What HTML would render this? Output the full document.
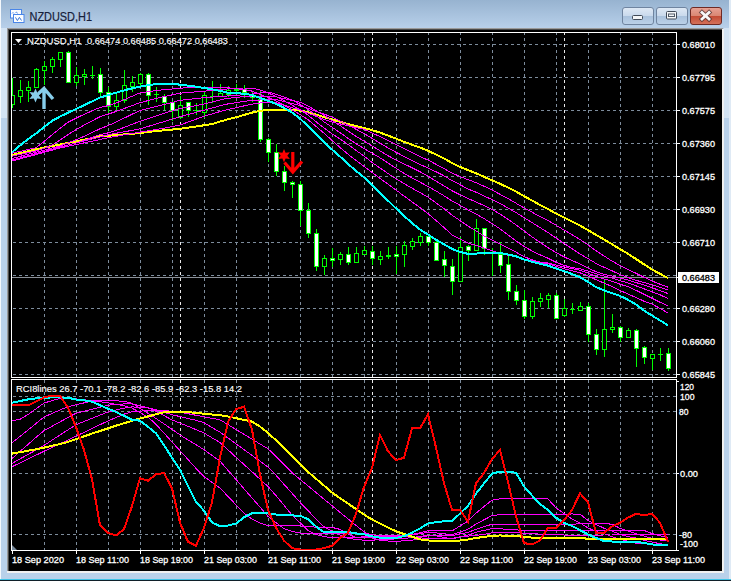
<!DOCTYPE html><html><head><meta charset="utf-8"><style>html,body{margin:0;padding:0;width:731px;height:581px;overflow:hidden;background:#b9d1ea}</style></head><body><svg width="731" height="581" viewBox="0 0 731 581" shape-rendering="crispEdges" style="position:absolute;left:0;top:0">
<defs>
<linearGradient id="tb" x1="0" y1="0" x2="0" y2="1"><stop offset="0" stop-color="#97b3d0"/><stop offset="1" stop-color="#b8d0ea"/></linearGradient>
<linearGradient id="btn" x1="0" y1="0" x2="0" y2="1"><stop offset="0" stop-color="#dfe9f5"/><stop offset="0.5" stop-color="#c9d9ec"/><stop offset="0.5" stop-color="#a9c1dc"/><stop offset="1" stop-color="#bcd2ea"/></linearGradient>
<linearGradient id="cls" x1="0" y1="0" x2="0" y2="1"><stop offset="0" stop-color="#e8a396"/><stop offset="0.5" stop-color="#d98672"/><stop offset="0.5" stop-color="#c24a33"/><stop offset="1" stop-color="#d5735c"/></linearGradient>
</defs>
<rect x="0" y="0" width="731" height="581" fill="#b9d1ea"/>
<rect x="0" y="0" width="731" height="28" fill="url(#tb)"/>
<rect x="1" y="28" width="6" height="90" fill="#d3e3f3"/>
<rect x="724" y="28" width="5" height="90" fill="#d3e3f3"/>
<rect x="0" y="0" width="1" height="581" fill="#f4f8fc"/>
<rect x="729" y="0" width="2" height="581" fill="#dfeaf5"/>
<rect x="0" y="579" width="731" height="1" fill="#3fc3e6"/><rect x="0" y="580" width="731" height="1" fill="#10202a"/>
<g shape-rendering="auto"><rect x="10.5" y="9.5" width="11" height="8.5" fill="#fbfdff" stroke="#4a86e8"/><path d="M12 13.5 L13 12.5 L14 13.5 M15.5 12.5 L16.5 12 L17.5 13.5" stroke="#4a86e8" fill="none" stroke-width="0.9"/><rect x="13.5" y="14.5" width="10.5" height="8" fill="#fbfdff" stroke="#4a86e8"/><path d="M15.5 17.4 L17.4 20.6 L19.4 17.4 L21.5 20.5" stroke="#3a76d8" fill="none" stroke-width="1"/></g>
<text x="29.5" y="21" font-family="Liberation Sans" font-size="12" fill="#16203a" stroke="#16203a" stroke-width="0.2" textLength="62.5" lengthAdjust="spacingAndGlyphs" shape-rendering="auto">NZDUSD,H1</text>
<g shape-rendering="auto">
<rect x="622.5" y="7.5" width="31" height="17" rx="2.5" fill="url(#btn)" stroke="#6f84a0"/>
<rect x="656.5" y="7.5" width="31" height="17" rx="2.5" fill="url(#btn)" stroke="#6f84a0"/>
<rect x="690.5" y="7.5" width="31" height="17" rx="2.5" fill="url(#cls)" stroke="#6e2a24"/>
<rect x="632.5" y="15.5" width="10" height="4" rx="1" fill="#f4f6f8" stroke="#404a58"/>
<rect x="666.5" y="11.5" width="10" height="7.5" rx="1" fill="#f4f6f8" stroke="#404a58"/><rect x="668.5" y="14" width="6" height="2.5" fill="#f4f6f8" stroke="#505a68" stroke-width="1"/>
<path d="M702 12.5 L709 19 M709 12.5 L702 19" stroke="#4a3030" stroke-width="4.6" stroke-linecap="square" opacity="0.75"/><path d="M702 12.5 L709 19 M709 12.5 L702 19" stroke="#f8f8f8" stroke-width="2.8" stroke-linecap="square"/>
</g>
<rect x="7" y="28" width="716" height="545" fill="#9a9a9a"/>
<rect x="8" y="29" width="715" height="543" fill="#4a4a4a"/>
<rect x="9" y="30" width="713" height="541" fill="#000"/>
<rect x="722" y="29" width="2" height="544" fill="#f0f0f0"/>
<rect x="7" y="571" width="717" height="2" fill="#f0f0f0"/>
<line x1="13" y1="44.5" x2="676" y2="44.5" stroke="#7d8c9c" stroke-dasharray="3 3"/>
<line x1="13" y1="77.5" x2="676" y2="77.5" stroke="#7d8c9c" stroke-dasharray="3 3"/>
<line x1="13" y1="110.5" x2="676" y2="110.5" stroke="#7d8c9c" stroke-dasharray="3 3"/>
<line x1="13" y1="143.5" x2="676" y2="143.5" stroke="#7d8c9c" stroke-dasharray="3 3"/>
<line x1="13" y1="176.5" x2="676" y2="176.5" stroke="#7d8c9c" stroke-dasharray="3 3"/>
<line x1="13" y1="209.5" x2="676" y2="209.5" stroke="#7d8c9c" stroke-dasharray="3 3"/>
<line x1="13" y1="242.5" x2="676" y2="242.5" stroke="#7d8c9c" stroke-dasharray="3 3"/>
<line x1="13" y1="275.5" x2="676" y2="275.5" stroke="#7d8c9c" stroke-dasharray="3 3"/>
<line x1="13" y1="308.5" x2="676" y2="308.5" stroke="#7d8c9c" stroke-dasharray="3 3"/>
<line x1="13" y1="341.5" x2="676" y2="341.5" stroke="#7d8c9c" stroke-dasharray="3 3"/>
<line x1="13" y1="374.5" x2="676" y2="374.5" stroke="#7d8c9c" stroke-dasharray="3 3"/>
<line x1="44.5" y1="32" x2="44.5" y2="377" stroke="#7d8c9c" stroke-dasharray="3 3"/>
<line x1="44.5" y1="380" x2="44.5" y2="550" stroke="#7d8c9c" stroke-dasharray="3 3"/>
<line x1="76.5" y1="32" x2="76.5" y2="377" stroke="#7d8c9c" stroke-dasharray="3 3"/>
<line x1="76.5" y1="380" x2="76.5" y2="550" stroke="#7d8c9c" stroke-dasharray="3 3"/>
<line x1="108.5" y1="32" x2="108.5" y2="377" stroke="#7d8c9c" stroke-dasharray="3 3"/>
<line x1="108.5" y1="380" x2="108.5" y2="550" stroke="#7d8c9c" stroke-dasharray="3 3"/>
<line x1="140.5" y1="32" x2="140.5" y2="377" stroke="#7d8c9c" stroke-dasharray="3 3"/>
<line x1="140.5" y1="380" x2="140.5" y2="550" stroke="#7d8c9c" stroke-dasharray="3 3"/>
<line x1="172.5" y1="32" x2="172.5" y2="377" stroke="#7d8c9c" stroke-dasharray="3 3"/>
<line x1="172.5" y1="380" x2="172.5" y2="550" stroke="#7d8c9c" stroke-dasharray="3 3"/>
<line x1="204.5" y1="32" x2="204.5" y2="377" stroke="#7d8c9c" stroke-dasharray="3 3"/>
<line x1="204.5" y1="380" x2="204.5" y2="550" stroke="#7d8c9c" stroke-dasharray="3 3"/>
<line x1="236.5" y1="32" x2="236.5" y2="377" stroke="#7d8c9c" stroke-dasharray="3 3"/>
<line x1="236.5" y1="380" x2="236.5" y2="550" stroke="#7d8c9c" stroke-dasharray="3 3"/>
<line x1="268.5" y1="32" x2="268.5" y2="377" stroke="#7d8c9c" stroke-dasharray="3 3"/>
<line x1="268.5" y1="380" x2="268.5" y2="550" stroke="#7d8c9c" stroke-dasharray="3 3"/>
<line x1="300.5" y1="32" x2="300.5" y2="377" stroke="#7d8c9c" stroke-dasharray="3 3"/>
<line x1="300.5" y1="380" x2="300.5" y2="550" stroke="#7d8c9c" stroke-dasharray="3 3"/>
<line x1="332.5" y1="32" x2="332.5" y2="377" stroke="#7d8c9c" stroke-dasharray="3 3"/>
<line x1="332.5" y1="380" x2="332.5" y2="550" stroke="#7d8c9c" stroke-dasharray="3 3"/>
<line x1="364.5" y1="32" x2="364.5" y2="377" stroke="#7d8c9c" stroke-dasharray="3 3"/>
<line x1="364.5" y1="380" x2="364.5" y2="550" stroke="#7d8c9c" stroke-dasharray="3 3"/>
<line x1="396.5" y1="32" x2="396.5" y2="377" stroke="#7d8c9c" stroke-dasharray="3 3"/>
<line x1="396.5" y1="380" x2="396.5" y2="550" stroke="#7d8c9c" stroke-dasharray="3 3"/>
<line x1="428.5" y1="32" x2="428.5" y2="377" stroke="#7d8c9c" stroke-dasharray="3 3"/>
<line x1="428.5" y1="380" x2="428.5" y2="550" stroke="#7d8c9c" stroke-dasharray="3 3"/>
<line x1="460.5" y1="32" x2="460.5" y2="377" stroke="#7d8c9c" stroke-dasharray="3 3"/>
<line x1="460.5" y1="380" x2="460.5" y2="550" stroke="#7d8c9c" stroke-dasharray="3 3"/>
<line x1="492.5" y1="32" x2="492.5" y2="377" stroke="#7d8c9c" stroke-dasharray="3 3"/>
<line x1="492.5" y1="380" x2="492.5" y2="550" stroke="#7d8c9c" stroke-dasharray="3 3"/>
<line x1="524.5" y1="32" x2="524.5" y2="377" stroke="#7d8c9c" stroke-dasharray="3 3"/>
<line x1="524.5" y1="380" x2="524.5" y2="550" stroke="#7d8c9c" stroke-dasharray="3 3"/>
<line x1="556.5" y1="32" x2="556.5" y2="377" stroke="#7d8c9c" stroke-dasharray="3 3"/>
<line x1="556.5" y1="380" x2="556.5" y2="550" stroke="#7d8c9c" stroke-dasharray="3 3"/>
<line x1="588.5" y1="32" x2="588.5" y2="377" stroke="#7d8c9c" stroke-dasharray="3 3"/>
<line x1="588.5" y1="380" x2="588.5" y2="550" stroke="#7d8c9c" stroke-dasharray="3 3"/>
<line x1="620.5" y1="32" x2="620.5" y2="377" stroke="#7d8c9c" stroke-dasharray="3 3"/>
<line x1="620.5" y1="380" x2="620.5" y2="550" stroke="#7d8c9c" stroke-dasharray="3 3"/>
<line x1="652.5" y1="32" x2="652.5" y2="377" stroke="#7d8c9c" stroke-dasharray="3 3"/>
<line x1="652.5" y1="380" x2="652.5" y2="550" stroke="#7d8c9c" stroke-dasharray="3 3"/>
<line x1="180.5" y1="32" x2="180.5" y2="377" stroke="#e8e8e8" stroke-dasharray="3 3"/>
<line x1="180.5" y1="380" x2="180.5" y2="550" stroke="#e8e8e8" stroke-dasharray="3 3"/>
<line x1="372.5" y1="32" x2="372.5" y2="377" stroke="#e8e8e8" stroke-dasharray="3 3"/>
<line x1="372.5" y1="380" x2="372.5" y2="550" stroke="#e8e8e8" stroke-dasharray="3 3"/>
<line x1="564.5" y1="32" x2="564.5" y2="377" stroke="#e8e8e8" stroke-dasharray="3 3"/>
<line x1="564.5" y1="380" x2="564.5" y2="550" stroke="#e8e8e8" stroke-dasharray="3 3"/>
<line x1="13" y1="396.5" x2="676" y2="396.5" stroke="#7d8c9c" stroke-dasharray="3 3"/>
<line x1="13" y1="411.5" x2="676" y2="411.5" stroke="#7d8c9c" stroke-dasharray="3 3"/>
<line x1="13" y1="473.5" x2="676" y2="473.5" stroke="#7d8c9c" stroke-dasharray="3 3"/>
<line x1="13" y1="534.5" x2="676" y2="534.5" stroke="#7d8c9c" stroke-dasharray="3 3"/>
<g></g>
<defs><clipPath id="cm"><rect x="12" y="33" width="664" height="344"/></clipPath><clipPath id="cs"><rect x="12" y="380" width="664" height="170"/></clipPath></defs>
<g clip-path="url(#cm)"><line x1="12" y1="277.5" x2="676" y2="277.5" stroke="#8b9098"/><rect x="12" y="78" width="1" height="30" fill="#00ff00"/><rect x="10" y="95" width="5" height="10" fill="#00ff00"/><rect x="11" y="96" width="3" height="8" fill="#000"/><rect x="20" y="80" width="1" height="23" fill="#00ff00"/><rect x="18" y="90" width="5" height="7" fill="#00ff00"/><rect x="19" y="91" width="3" height="5" fill="#000"/><rect x="28" y="81" width="1" height="21" fill="#00ff00"/><rect x="26" y="87" width="5" height="4" fill="#00ff00"/><rect x="27" y="88" width="3" height="2" fill="#000"/><rect x="36" y="68" width="1" height="20" fill="#00ff00"/><rect x="34" y="69" width="5" height="19" fill="#00ff00"/><rect x="35" y="70" width="3" height="17" fill="#000"/><rect x="44" y="61" width="1" height="24" fill="#00ff00"/><rect x="42" y="66" width="5" height="5" fill="#00ff00"/><rect x="43" y="67" width="3" height="3" fill="#000"/><rect x="52" y="57" width="1" height="16" fill="#00ff00"/><rect x="50" y="59" width="5" height="8" fill="#00ff00"/><rect x="51" y="60" width="3" height="6" fill="#000"/><rect x="60" y="52" width="1" height="15" fill="#00ff00"/><rect x="58" y="52" width="5" height="8" fill="#00ff00"/><rect x="59" y="53" width="3" height="6" fill="#000"/><rect x="68" y="51" width="1" height="32" fill="#00ff00"/><rect x="66" y="52" width="5" height="31" fill="#00ff00"/><rect x="67" y="53" width="3" height="29" fill="#fff"/><rect x="76" y="67" width="1" height="19" fill="#00ff00"/><rect x="74" y="75" width="5" height="8" fill="#00ff00"/><rect x="75" y="76" width="3" height="6" fill="#000"/><rect x="84" y="69" width="1" height="16" fill="#00ff00"/><rect x="82" y="74" width="5" height="3" fill="#00ff00"/><rect x="83" y="75" width="3" height="1" fill="#000"/><rect x="92" y="66" width="1" height="13" fill="#00ff00"/><rect x="90" y="75" width="5" height="1" fill="#00ff00"/><rect x="100" y="68" width="1" height="29" fill="#00ff00"/><rect x="98" y="74" width="5" height="19" fill="#00ff00"/><rect x="99" y="75" width="3" height="17" fill="#fff"/><rect x="108" y="87" width="1" height="26" fill="#00ff00"/><rect x="106" y="92" width="5" height="15" fill="#00ff00"/><rect x="107" y="93" width="3" height="13" fill="#fff"/><rect x="116" y="94" width="1" height="16" fill="#00ff00"/><rect x="114" y="100" width="5" height="7" fill="#00ff00"/><rect x="115" y="101" width="3" height="5" fill="#000"/><rect x="124" y="70" width="1" height="33" fill="#00ff00"/><rect x="122" y="85" width="5" height="16" fill="#00ff00"/><rect x="123" y="86" width="3" height="14" fill="#000"/><rect x="132" y="76" width="1" height="16" fill="#00ff00"/><rect x="130" y="82" width="5" height="5" fill="#00ff00"/><rect x="131" y="83" width="3" height="3" fill="#000"/><rect x="140" y="73" width="1" height="13" fill="#00ff00"/><rect x="138" y="74" width="5" height="10" fill="#00ff00"/><rect x="139" y="75" width="3" height="8" fill="#000"/><rect x="148" y="73" width="1" height="32" fill="#00ff00"/><rect x="146" y="74" width="5" height="22" fill="#00ff00"/><rect x="147" y="75" width="3" height="20" fill="#fff"/><rect x="156" y="87" width="1" height="15" fill="#00ff00"/><rect x="154" y="94" width="5" height="1" fill="#00ff00"/><rect x="164" y="94" width="1" height="16" fill="#00ff00"/><rect x="162" y="96" width="5" height="7" fill="#00ff00"/><rect x="163" y="97" width="3" height="5" fill="#fff"/><rect x="172" y="101" width="1" height="20" fill="#00ff00"/><rect x="170" y="102" width="5" height="9" fill="#00ff00"/><rect x="171" y="103" width="3" height="7" fill="#fff"/><rect x="180" y="96" width="1" height="23" fill="#00ff00"/><rect x="178" y="105" width="5" height="13" fill="#00ff00"/><rect x="179" y="106" width="3" height="11" fill="#000"/><rect x="188" y="102" width="1" height="15" fill="#00ff00"/><rect x="186" y="102" width="5" height="9" fill="#00ff00"/><rect x="187" y="103" width="3" height="7" fill="#fff"/><rect x="196" y="103" width="1" height="12" fill="#00ff00"/><rect x="194" y="110" width="5" height="1" fill="#00ff00"/><rect x="204" y="92" width="1" height="26" fill="#00ff00"/><rect x="202" y="95" width="5" height="18" fill="#00ff00"/><rect x="203" y="96" width="3" height="16" fill="#000"/><rect x="212" y="81" width="1" height="22" fill="#00ff00"/><rect x="210" y="96" width="5" height="1" fill="#00ff00"/><rect x="220" y="84" width="1" height="13" fill="#00ff00"/><rect x="218" y="93" width="5" height="4" fill="#00ff00"/><rect x="219" y="94" width="3" height="2" fill="#000"/><rect x="228" y="86" width="1" height="11" fill="#00ff00"/><rect x="226" y="90" width="5" height="5" fill="#00ff00"/><rect x="227" y="91" width="3" height="3" fill="#000"/><rect x="236" y="84" width="1" height="8" fill="#00ff00"/><rect x="234" y="89" width="5" height="2" fill="#00ff00"/><rect x="244" y="85" width="1" height="13" fill="#00ff00"/><rect x="242" y="89" width="5" height="4" fill="#00ff00"/><rect x="243" y="90" width="3" height="2" fill="#fff"/><rect x="252" y="92" width="1" height="10" fill="#00ff00"/><rect x="250" y="95" width="5" height="3" fill="#00ff00"/><rect x="251" y="96" width="3" height="1" fill="#fff"/><rect x="260" y="91" width="1" height="51" fill="#00ff00"/><rect x="258" y="99" width="5" height="41" fill="#00ff00"/><rect x="259" y="100" width="3" height="39" fill="#fff"/><rect x="268" y="138" width="1" height="24" fill="#00ff00"/><rect x="266" y="139" width="5" height="14" fill="#00ff00"/><rect x="267" y="140" width="3" height="12" fill="#fff"/><rect x="276" y="144" width="1" height="32" fill="#00ff00"/><rect x="274" y="152" width="5" height="20" fill="#00ff00"/><rect x="275" y="153" width="3" height="18" fill="#fff"/><rect x="284" y="166" width="1" height="25" fill="#00ff00"/><rect x="282" y="171" width="5" height="12" fill="#00ff00"/><rect x="283" y="172" width="3" height="10" fill="#fff"/><rect x="292" y="181" width="1" height="17" fill="#00ff00"/><rect x="290" y="182" width="5" height="3" fill="#00ff00"/><rect x="291" y="183" width="3" height="1" fill="#fff"/><rect x="300" y="181" width="1" height="45" fill="#00ff00"/><rect x="298" y="184" width="5" height="27" fill="#00ff00"/><rect x="299" y="185" width="3" height="25" fill="#fff"/><rect x="308" y="203" width="1" height="35" fill="#00ff00"/><rect x="306" y="210" width="5" height="24" fill="#00ff00"/><rect x="307" y="211" width="3" height="22" fill="#fff"/><rect x="316" y="229" width="1" height="42" fill="#00ff00"/><rect x="314" y="233" width="5" height="34" fill="#00ff00"/><rect x="315" y="234" width="3" height="32" fill="#fff"/><rect x="324" y="255" width="1" height="20" fill="#00ff00"/><rect x="322" y="258" width="5" height="9" fill="#00ff00"/><rect x="323" y="259" width="3" height="7" fill="#000"/><rect x="332" y="248" width="1" height="19" fill="#00ff00"/><rect x="330" y="258" width="5" height="3" fill="#00ff00"/><rect x="331" y="259" width="3" height="1" fill="#fff"/><rect x="340" y="252" width="1" height="13" fill="#00ff00"/><rect x="338" y="254" width="5" height="6" fill="#00ff00"/><rect x="339" y="255" width="3" height="4" fill="#000"/><rect x="348" y="247" width="1" height="18" fill="#00ff00"/><rect x="346" y="254" width="5" height="9" fill="#00ff00"/><rect x="347" y="255" width="3" height="7" fill="#fff"/><rect x="356" y="247" width="1" height="16" fill="#00ff00"/><rect x="354" y="253" width="5" height="10" fill="#00ff00"/><rect x="355" y="254" width="3" height="8" fill="#000"/><rect x="364" y="246" width="1" height="9" fill="#00ff00"/><rect x="362" y="250" width="5" height="5" fill="#00ff00"/><rect x="363" y="251" width="3" height="3" fill="#000"/><rect x="372" y="246" width="1" height="19" fill="#00ff00"/><rect x="370" y="251" width="5" height="8" fill="#00ff00"/><rect x="371" y="252" width="3" height="6" fill="#fff"/><rect x="380" y="251" width="1" height="14" fill="#00ff00"/><rect x="378" y="256" width="5" height="4" fill="#00ff00"/><rect x="379" y="257" width="3" height="2" fill="#000"/><rect x="388" y="247" width="1" height="12" fill="#00ff00"/><rect x="386" y="255" width="5" height="2" fill="#00ff00"/><rect x="396" y="246" width="1" height="28" fill="#00ff00"/><rect x="394" y="254" width="5" height="3" fill="#00ff00"/><rect x="395" y="255" width="3" height="1" fill="#fff"/><rect x="404" y="241" width="1" height="26" fill="#00ff00"/><rect x="402" y="245" width="5" height="10" fill="#00ff00"/><rect x="403" y="246" width="3" height="8" fill="#000"/><rect x="412" y="238" width="1" height="12" fill="#00ff00"/><rect x="410" y="241" width="5" height="6" fill="#00ff00"/><rect x="411" y="242" width="3" height="4" fill="#000"/><rect x="420" y="233" width="1" height="13" fill="#00ff00"/><rect x="418" y="236" width="5" height="7" fill="#00ff00"/><rect x="419" y="237" width="3" height="5" fill="#000"/><rect x="428" y="235" width="1" height="11" fill="#00ff00"/><rect x="426" y="236" width="5" height="7" fill="#00ff00"/><rect x="427" y="237" width="3" height="5" fill="#fff"/><rect x="436" y="241" width="1" height="20" fill="#00ff00"/><rect x="434" y="242" width="5" height="19" fill="#00ff00"/><rect x="435" y="243" width="3" height="17" fill="#fff"/><rect x="444" y="251" width="1" height="26" fill="#00ff00"/><rect x="442" y="259" width="5" height="7" fill="#00ff00"/><rect x="443" y="260" width="3" height="5" fill="#fff"/><rect x="452" y="259" width="1" height="36" fill="#00ff00"/><rect x="450" y="266" width="5" height="16" fill="#00ff00"/><rect x="451" y="267" width="3" height="14" fill="#fff"/><rect x="460" y="237" width="1" height="45" fill="#00ff00"/><rect x="458" y="247" width="5" height="35" fill="#00ff00"/><rect x="459" y="248" width="3" height="33" fill="#000"/><rect x="468" y="245" width="1" height="16" fill="#00ff00"/><rect x="466" y="246" width="5" height="5" fill="#00ff00"/><rect x="467" y="247" width="3" height="3" fill="#fff"/><rect x="476" y="219" width="1" height="32" fill="#00ff00"/><rect x="474" y="228" width="5" height="23" fill="#00ff00"/><rect x="475" y="229" width="3" height="21" fill="#000"/><rect x="484" y="228" width="1" height="27" fill="#00ff00"/><rect x="482" y="228" width="5" height="21" fill="#00ff00"/><rect x="483" y="229" width="3" height="19" fill="#fff"/><rect x="492" y="248" width="1" height="28" fill="#00ff00"/><rect x="490" y="253" width="5" height="1" fill="#00ff00"/><rect x="500" y="242" width="1" height="31" fill="#00ff00"/><rect x="498" y="254" width="5" height="12" fill="#00ff00"/><rect x="499" y="255" width="3" height="10" fill="#fff"/><rect x="508" y="255" width="1" height="45" fill="#00ff00"/><rect x="506" y="264" width="5" height="28" fill="#00ff00"/><rect x="507" y="265" width="3" height="26" fill="#fff"/><rect x="516" y="285" width="1" height="20" fill="#00ff00"/><rect x="514" y="291" width="5" height="10" fill="#00ff00"/><rect x="515" y="292" width="3" height="8" fill="#fff"/><rect x="524" y="290" width="1" height="29" fill="#00ff00"/><rect x="522" y="300" width="5" height="17" fill="#00ff00"/><rect x="523" y="301" width="3" height="15" fill="#fff"/><rect x="532" y="297" width="1" height="22" fill="#00ff00"/><rect x="530" y="301" width="5" height="16" fill="#00ff00"/><rect x="531" y="302" width="3" height="14" fill="#000"/><rect x="540" y="293" width="1" height="14" fill="#00ff00"/><rect x="538" y="298" width="5" height="4" fill="#00ff00"/><rect x="539" y="299" width="3" height="2" fill="#000"/><rect x="548" y="293" width="1" height="15" fill="#00ff00"/><rect x="546" y="295" width="5" height="5" fill="#00ff00"/><rect x="547" y="296" width="3" height="3" fill="#000"/><rect x="556" y="293" width="1" height="26" fill="#00ff00"/><rect x="554" y="295" width="5" height="24" fill="#00ff00"/><rect x="555" y="296" width="3" height="22" fill="#fff"/><rect x="564" y="299" width="1" height="18" fill="#00ff00"/><rect x="562" y="308" width="5" height="8" fill="#00ff00"/><rect x="563" y="309" width="3" height="6" fill="#000"/><rect x="572" y="303" width="1" height="11" fill="#00ff00"/><rect x="570" y="309" width="5" height="1" fill="#00ff00"/><rect x="580" y="302" width="1" height="9" fill="#00ff00"/><rect x="578" y="306" width="5" height="5" fill="#00ff00"/><rect x="579" y="307" width="3" height="3" fill="#000"/><rect x="588" y="303" width="1" height="39" fill="#00ff00"/><rect x="586" y="306" width="5" height="29" fill="#00ff00"/><rect x="587" y="307" width="3" height="27" fill="#fff"/><rect x="596" y="329" width="1" height="26" fill="#00ff00"/><rect x="594" y="334" width="5" height="16" fill="#00ff00"/><rect x="595" y="335" width="3" height="14" fill="#fff"/><rect x="604" y="280" width="1" height="77" fill="#00ff00"/><rect x="602" y="329" width="5" height="21" fill="#00ff00"/><rect x="603" y="330" width="3" height="19" fill="#000"/><rect x="612" y="314" width="1" height="19" fill="#00ff00"/><rect x="610" y="327" width="5" height="3" fill="#00ff00"/><rect x="611" y="328" width="3" height="1" fill="#000"/><rect x="620" y="326" width="1" height="16" fill="#00ff00"/><rect x="618" y="327" width="5" height="11" fill="#00ff00"/><rect x="619" y="328" width="3" height="9" fill="#fff"/><rect x="628" y="328" width="1" height="10" fill="#00ff00"/><rect x="626" y="330" width="5" height="8" fill="#00ff00"/><rect x="627" y="331" width="3" height="6" fill="#000"/><rect x="636" y="329" width="1" height="38" fill="#00ff00"/><rect x="634" y="330" width="5" height="19" fill="#00ff00"/><rect x="635" y="331" width="3" height="17" fill="#fff"/><rect x="644" y="346" width="1" height="18" fill="#00ff00"/><rect x="642" y="347" width="5" height="11" fill="#00ff00"/><rect x="643" y="348" width="3" height="9" fill="#fff"/><rect x="652" y="354" width="1" height="16" fill="#00ff00"/><rect x="650" y="354" width="5" height="5" fill="#00ff00"/><rect x="651" y="355" width="3" height="3" fill="#000"/><rect x="660" y="348" width="1" height="13" fill="#00ff00"/><rect x="658" y="354" width="5" height="1" fill="#00ff00"/><rect x="668" y="348" width="1" height="23" fill="#00ff00"/><rect x="666" y="353" width="5" height="16" fill="#00ff00"/><rect x="667" y="354" width="3" height="14" fill="#fff"/></g>
<g shape-rendering="crispEdges" clip-path="url(#cm)"><path d="M12.0 155.0 L20.0 153.1 L28.0 151.3 L36.0 149.4 L44.0 147.6 L52.0 146.0 L60.0 144.5 L68.0 142.9 L76.0 141.4 L84.0 139.7 L92.0 138.1 L100.0 136.4 L108.0 135.7 L116.0 135.1 L124.0 134.4 L132.0 133.8 L140.0 132.9 L148.0 132.0 L156.0 131.1 L164.0 130.3 L172.0 129.6 L180.0 128.8 L188.0 127.6 L196.0 126.5 L204.0 125.3 L212.0 124.1 L220.0 121.6 L228.0 119.3 L236.0 117.3 L244.0 115.0 L252.0 112.6 L260.0 110.9 L268.0 109.9 L276.0 109.8 L284.0 109.8 L292.0 109.8 L300.0 110.6 L308.0 112.2 L316.0 114.7 L324.0 117.1 L332.0 119.5 L340.0 121.8 L348.0 124.1 L356.0 126.1 L364.0 128.1 L372.0 130.1 L380.0 132.6 L388.0 135.6 L396.0 138.6 L404.0 141.8 L412.0 144.7 L420.0 147.6 L428.0 150.7 L436.0 154.6 L444.0 158.5 L452.0 163.0 L460.0 166.9 L468.0 170.2 L476.0 173.3 L484.0 176.8 L492.0 180.3 L500.0 183.8 L508.0 187.5 L516.0 191.5 L524.0 196.1 L532.0 200.5 L540.0 205.0 L548.0 209.0 L556.0 213.5 L564.0 217.6 L572.0 221.6 L580.0 225.6 L588.0 230.1 L596.0 234.9 L604.0 239.5 L612.0 244.2 L620.0 249.1 L628.0 253.8 L636.0 259.0 L644.0 264.3 L652.0 269.5 L660.0 273.8 L668.0 278.1" fill="none" stroke="#ffff00" stroke-width="2" stroke-linejoin="round"/><path d="M12.0 161.1 L20.0 158.9 L28.0 156.7 L36.0 154.6 L44.0 152.4 L52.0 150.2 L60.0 148.0 L68.0 146.3 L76.0 144.6 L84.0 142.9 L92.0 141.2 L100.0 139.5 L108.0 137.8 L116.0 136.3 L124.0 134.9 L132.0 133.5 L140.0 132.1 L148.0 130.8 L156.0 129.6 L164.0 128.2 L172.0 126.6 L180.0 125.0 L188.0 122.1 L196.0 119.2 L204.0 116.3 L212.0 113.9 L220.0 111.6 L228.0 109.5 L236.0 107.7 L244.0 105.9 L252.0 104.1 L260.0 103.0 L268.0 102.7 L276.0 102.7 L284.0 105.1 L292.0 107.6 L300.0 110.0 L308.0 113.1 L316.0 116.2 L324.0 119.4 L332.0 122.1 L340.0 123.9 L348.0 125.7 L356.0 127.5 L364.0 129.3 L372.0 132.9 L380.0 136.6 L388.0 140.3 L396.0 144.5 L404.0 148.5 L412.0 152.5 L420.0 156.6 L428.0 160.1 L436.0 164.3 L444.0 168.5 L452.0 173.1 L460.0 176.5 L468.0 179.7 L476.0 182.6 L484.0 186.2 L492.0 190.0 L500.0 194.3 L508.0 198.6 L516.0 203.2 L524.0 207.9 L532.0 212.2 L540.0 216.5 L548.0 220.6 L556.0 225.2 L564.0 230.0 L572.0 234.7 L580.0 239.5 L588.0 244.9 L596.0 250.7 L604.0 255.9 L612.0 261.1 L620.0 265.5 L628.0 269.4 L636.0 273.3 L644.0 277.2 L652.0 281.0 L660.0 284.2 L668.0 287.2" fill="none" stroke="#ff00ff" stroke-width="1" stroke-linejoin="round"/><path d="M12.0 160.5 L20.0 158.2 L28.0 156.0 L36.0 153.8 L44.0 151.5 L52.0 149.2 L60.0 147.0 L68.0 145.0 L76.0 143.0 L84.0 141.0 L92.0 139.0 L100.0 136.9 L108.0 134.9 L116.0 133.3 L124.0 131.8 L132.0 130.4 L140.0 128.9 L148.0 126.5 L156.0 124.0 L164.0 121.6 L172.0 119.1 L180.0 116.7 L188.0 114.5 L196.0 112.4 L204.0 110.2 L212.0 108.0 L220.0 105.8 L228.0 103.9 L236.0 102.7 L244.0 101.4 L252.0 100.4 L260.0 100.0 L268.0 99.6 L276.0 99.5 L284.0 101.5 L292.0 103.5 L300.0 105.5 L308.0 108.4 L316.0 111.3 L324.0 114.1 L332.0 117.0 L340.0 120.9 L348.0 125.1 L356.0 129.2 L364.0 133.6 L372.0 138.3 L380.0 143.1 L388.0 148.0 L396.0 152.2 L404.0 156.4 L412.0 160.4 L420.0 164.4 L428.0 168.1 L436.0 171.8 L444.0 175.8 L452.0 180.6 L460.0 184.7 L468.0 189.0 L476.0 192.2 L484.0 196.0 L492.0 199.6 L500.0 203.4 L508.0 208.0 L516.0 212.6 L524.0 217.6 L532.0 222.6 L540.0 227.6 L548.0 232.5 L556.0 238.1 L564.0 243.4 L572.0 248.7 L580.0 253.9 L588.0 258.6 L596.0 263.4 L604.0 267.3 L612.0 270.8 L620.0 274.6 L628.0 277.5 L636.0 280.3 L644.0 282.5 L652.0 284.9 L660.0 287.2 L668.0 289.9" fill="none" stroke="#ff00ff" stroke-width="1" stroke-linejoin="round"/><path d="M12.0 160.0 L20.0 157.9 L28.0 155.8 L36.0 153.6 L44.0 151.5 L52.0 149.4 L60.0 147.2 L68.0 145.1 L76.0 143.0 L84.0 140.3 L92.0 137.5 L100.0 134.8 L108.0 132.9 L116.0 130.5 L124.0 127.4 L132.0 124.4 L140.0 121.3 L148.0 118.6 L156.0 115.9 L164.0 113.3 L172.0 110.9 L180.0 108.5 L188.0 107.0 L196.0 105.6 L204.0 104.1 L212.0 102.1 L220.0 99.9 L228.0 98.3 L236.0 97.5 L244.0 96.6 L252.0 96.0 L260.0 96.2 L268.0 96.4 L276.0 96.8 L284.0 98.6 L292.0 100.4 L300.0 102.2 L308.0 105.9 L316.0 110.7 L324.0 115.3 L332.0 120.5 L340.0 125.5 L348.0 131.0 L356.0 136.4 L364.0 141.0 L372.0 145.9 L380.0 150.8 L388.0 155.7 L396.0 160.1 L404.0 163.9 L412.0 167.7 L420.0 171.8 L428.0 176.1 L436.0 181.2 L444.0 185.8 L452.0 190.8 L460.0 194.7 L468.0 198.5 L476.0 201.9 L484.0 205.6 L492.0 209.5 L500.0 214.0 L508.0 219.3 L516.0 224.9 L524.0 231.0 L532.0 236.8 L540.0 242.3 L548.0 247.7 L556.0 252.6 L564.0 256.8 L572.0 260.5 L580.0 263.9 L588.0 268.0 L596.0 271.7 L604.0 274.3 L612.0 276.0 L620.0 278.1 L628.0 280.0 L636.0 282.5 L644.0 285.1 L652.0 287.8 L660.0 290.6 L668.0 293.6" fill="none" stroke="#ff00ff" stroke-width="1" stroke-linejoin="round"/><path d="M12.0 158.5 L20.0 156.4 L28.0 154.3 L36.0 152.2 L44.0 150.2 L52.0 148.1 L60.0 146.0 L68.0 142.9 L76.0 139.8 L84.0 136.4 L92.0 132.6 L100.0 128.8 L108.0 125.6 L116.0 122.1 L124.0 118.2 L132.0 114.3 L140.0 110.4 L148.0 108.5 L156.0 106.6 L164.0 104.6 L172.0 102.5 L180.0 100.3 L188.0 99.4 L196.0 98.6 L204.0 97.7 L212.0 97.1 L220.0 96.5 L228.0 95.9 L236.0 95.3 L244.0 94.7 L252.0 94.0 L260.0 93.0 L268.0 92.0 L276.0 94.2 L284.0 97.0 L292.0 100.0 L300.0 104.3 L308.0 109.3 L316.0 115.6 L324.0 121.8 L332.0 127.2 L340.0 132.6 L348.0 138.3 L356.0 143.7 L364.0 148.5 L372.0 153.1 L380.0 157.8 L388.0 163.0 L396.0 168.2 L404.0 173.4 L412.0 177.9 L420.0 182.2 L428.0 186.4 L436.0 191.0 L444.0 195.8 L452.0 201.0 L460.0 205.2 L468.0 209.9 L476.0 213.9 L484.0 218.6 L492.0 223.5 L500.0 228.8 L508.0 234.9 L516.0 241.0 L524.0 246.4 L532.0 250.9 L540.0 254.8 L548.0 258.2 L556.0 262.3 L564.0 265.3 L572.0 267.6 L580.0 268.8 L588.0 271.1 L596.0 273.8 L604.0 276.1 L612.0 278.1 L620.0 280.6 L628.0 283.0 L636.0 285.8 L644.0 288.8 L652.0 291.8 L660.0 294.8 L668.0 298.5" fill="none" stroke="#ff00ff" stroke-width="1" stroke-linejoin="round"/><path d="M12.0 156.2 L20.0 154.4 L28.0 152.7 L36.0 150.9 L44.0 148.4 L52.0 145.2 L60.0 140.0 L68.0 134.6 L76.0 129.7 L84.0 125.2 L92.0 120.9 L100.0 116.7 L108.0 114.2 L116.0 111.5 L124.0 108.6 L132.0 105.6 L140.0 102.7 L148.0 100.6 L156.0 98.5 L164.0 96.6 L172.0 94.9 L180.0 93.2 L188.0 92.5 L196.0 91.8 L204.0 91.2 L212.0 90.4 L220.0 89.6 L228.0 88.9 L236.0 88.1 L244.0 88.0 L252.0 88.2 L260.0 90.0 L268.0 92.9 L276.0 96.5 L284.0 100.7 L292.0 105.2 L300.0 109.6 L308.0 115.1 L316.0 121.7 L324.0 128.0 L332.0 133.8 L340.0 138.9 L348.0 144.5 L356.0 150.3 L364.0 156.1 L372.0 162.4 L380.0 168.0 L388.0 173.5 L396.0 178.8 L404.0 183.5 L412.0 188.2 L420.0 192.6 L428.0 197.1 L436.0 202.8 L444.0 208.7 L452.0 215.1 L460.0 220.6 L468.0 226.1 L476.0 230.8 L484.0 236.1 L492.0 240.0 L500.0 243.9 L508.0 248.0 L516.0 252.1 L524.0 256.6 L532.0 259.8 L540.0 262.0 L548.0 263.0 L556.0 265.1 L564.0 266.8 L572.0 268.7 L580.0 270.2 L588.0 273.0 L596.0 276.5 L604.0 278.9 L612.0 281.3 L620.0 284.2 L628.0 286.7 L636.0 290.3 L644.0 294.3 L652.0 298.3 L660.0 302.2 L668.0 305.9" fill="none" stroke="#ff00ff" stroke-width="1" stroke-linejoin="round"/><path d="M12.0 153.2 L20.0 151.4 L28.0 149.5 L36.0 147.7 L44.0 141.5 L52.0 134.8 L60.0 128.4 L68.0 122.2 L76.0 118.2 L84.0 114.4 L92.0 110.9 L100.0 107.4 L108.0 105.7 L116.0 103.1 L124.0 99.7 L132.0 96.3 L140.0 92.9 L148.0 91.7 L156.0 90.6 L164.0 89.7 L172.0 89.0 L180.0 88.3 L188.0 87.6 L196.0 87.4 L204.0 87.5 L212.0 87.5 L220.0 87.6 L228.0 87.8 L236.0 88.6 L244.0 89.6 L252.0 91.1 L260.0 94.5 L268.0 97.3 L276.0 101.1 L284.0 105.4 L292.0 109.8 L300.0 114.5 L308.0 119.6 L316.0 126.3 L324.0 133.2 L332.0 140.3 L340.0 147.5 L348.0 154.2 L356.0 160.5 L364.0 166.4 L372.0 172.4 L380.0 178.4 L388.0 184.2 L396.0 190.0 L404.0 196.0 L412.0 201.9 L420.0 207.6 L428.0 213.7 L436.0 220.5 L444.0 227.5 L452.0 234.8 L460.0 239.2 L468.0 243.1 L476.0 245.4 L484.0 248.1 L492.0 250.8 L500.0 253.0 L508.0 255.3 L516.0 256.7 L524.0 259.0 L532.0 260.7 L540.0 262.4 L548.0 263.8 L556.0 266.4 L564.0 268.7 L572.0 270.8 L580.0 272.8 L588.0 275.9 L596.0 279.7 L604.0 283.0 L612.0 286.5 L620.0 290.5 L628.0 294.0 L636.0 297.5 L644.0 301.2 L652.0 304.1 L660.0 308.4 L668.0 313.1" fill="none" stroke="#ff00ff" stroke-width="1" stroke-linejoin="round"/><path d="M12.0 152.3 L20.0 145.5 L28.0 139.1 L36.0 133.5 L44.0 127.1 L52.0 120.9 L60.0 116.6 L68.0 112.7 L76.0 109.1 L84.0 105.2 L92.0 101.4 L100.0 97.6 L108.0 95.1 L116.0 92.7 L124.0 90.4 L132.0 88.4 L140.0 86.7 L148.0 85.2 L156.0 84.1 L164.0 84.0 L172.0 84.1 L180.0 84.6 L188.0 85.6 L196.0 86.7 L204.0 87.9 L212.0 89.3 L220.0 90.9 L228.0 92.7 L236.0 93.0 L244.0 93.8 L252.0 94.9 L260.0 97.9 L268.0 100.8 L276.0 103.9 L284.0 107.8 L292.0 112.5 L300.0 118.6 L308.0 126.2 L316.0 134.3 L324.0 142.1 L332.0 149.6 L340.0 156.5 L348.0 164.0 L356.0 170.8 L364.0 177.4 L372.0 185.2 L380.0 192.8 L388.0 200.6 L396.0 208.4 L404.0 215.9 L412.0 223.0 L420.0 229.6 L428.0 234.6 L436.0 239.7 L444.0 244.2 L452.0 248.9 L460.0 251.9 L468.0 253.9 L476.0 253.6 L484.0 252.8 L492.0 252.5 L500.0 252.8 L508.0 254.5 L516.0 256.3 L524.0 259.4 L532.0 261.8 L540.0 263.7 L548.0 265.6 L556.0 268.6 L564.0 271.1 L572.0 274.1 L580.0 277.2 L588.0 281.9 L596.0 287.0 L604.0 290.3 L612.0 293.2 L620.0 295.9 L628.0 299.8 L636.0 304.4 L644.0 310.6 L652.0 315.6 L660.0 320.4 L668.0 325.3" fill="none" stroke="#00ffff" stroke-width="2" stroke-linejoin="round"/></g>
<g shape-rendering="crispEdges" clip-path="url(#cs)"><path d="M12.0 466.7 L20.0 462.9 L28.0 459.0 L36.0 455.2 L44.0 451.3 L52.0 447.5 L60.0 443.7 L68.0 440.0 L76.0 436.2 L84.0 432.4 L92.0 428.5 L100.0 424.7 L108.0 420.9 L116.0 417.6 L124.0 414.2 L132.0 411.6 L140.0 411.1 L148.0 410.7 L156.0 410.2 L164.0 410.5 L172.0 411.4 L180.0 412.4 L188.0 413.7 L196.0 415.3 L204.0 416.8 L212.0 418.3 L220.0 419.8 L228.0 424.6 L236.0 429.5 L244.0 434.3 L252.0 439.1 L260.0 444.0 L268.0 448.8 L276.0 456.3 L284.0 464.7 L292.0 472.7 L300.0 479.3 L308.0 485.9 L316.0 492.5 L324.0 499.1 L332.0 505.7 L340.0 512.3 L348.0 518.9 L356.0 525.4 L364.0 531.7 L372.0 538.1 L380.0 540.2 L388.0 541.0 L396.0 541.4 L404.0 540.8 L412.0 540.1 L420.0 539.2 L428.0 538.3 L436.0 538.3 L444.0 538.2 L452.0 538.3 L460.0 536.9 L468.0 536.1 L476.0 535.3 L484.0 534.5 L492.0 532.8 L500.0 532.4 L508.0 532.4 L516.0 532.8 L524.0 533.2 L532.0 533.7 L540.0 534.1 L548.0 534.4 L556.0 534.8 L564.0 535.0 L572.0 535.0 L580.0 535.0 L588.0 535.0 L596.0 535.1 L604.0 535.0 L612.0 535.0 L620.0 534.9 L628.0 534.8 L636.0 534.8 L644.0 534.8 L652.0 534.8 L660.0 534.8 L668.0 534.8" fill="none" stroke="#ff00ff" stroke-width="1"/><path d="M12.0 463.4 L20.0 458.9 L28.0 454.5 L36.0 450.0 L44.0 445.4 L52.0 440.2 L60.0 435.0 L68.0 429.8 L76.0 424.7 L84.0 421.5 L92.0 418.3 L100.0 415.1 L108.0 411.9 L116.0 410.0 L124.0 408.2 L132.0 406.9 L140.0 407.4 L148.0 407.9 L156.0 409.8 L164.0 412.3 L172.0 414.7 L180.0 416.6 L188.0 418.5 L196.0 420.3 L204.0 422.7 L212.0 427.5 L220.0 432.2 L228.0 438.0 L236.0 443.8 L244.0 449.6 L252.0 455.4 L260.0 461.2 L268.0 467.0 L276.0 475.2 L284.0 484.3 L292.0 493.3 L300.0 502.3 L308.0 510.6 L316.0 518.9 L324.0 526.7 L332.0 530.9 L340.0 535.2 L348.0 538.3 L356.0 539.5 L364.0 540.2 L372.0 540.1 L380.0 539.8 L388.0 539.4 L396.0 538.9 L404.0 538.4 L412.0 537.6 L420.0 536.5 L428.0 535.3 L436.0 535.8 L444.0 537.4 L452.0 538.8 L460.0 537.0 L468.0 535.1 L476.0 532.2 L484.0 530.4 L492.0 528.5 L500.0 528.8 L508.0 529.4 L516.0 529.9 L524.0 530.3 L532.0 530.7 L540.0 530.8 L548.0 530.8 L556.0 530.8 L564.0 530.8 L572.0 530.7 L580.0 530.5 L588.0 530.5 L596.0 530.5 L604.0 530.5 L612.0 530.4 L620.0 530.4 L628.0 530.2 L636.0 530.2 L644.0 530.4 L652.0 533.6 L660.0 535.8 L668.0 537.8" fill="none" stroke="#ff00ff" stroke-width="1"/><path d="M12.0 458.5 L20.0 451.5 L28.0 444.4 L36.0 437.4 L44.0 430.7 L52.0 426.3 L60.0 421.9 L68.0 417.5 L76.0 413.2 L84.0 411.2 L92.0 409.2 L100.0 407.2 L108.0 405.2 L116.0 404.5 L124.0 403.9 L132.0 403.9 L140.0 405.8 L148.0 407.6 L156.0 411.3 L164.0 415.6 L172.0 419.9 L180.0 423.1 L188.0 426.3 L196.0 429.6 L204.0 433.0 L212.0 437.8 L220.0 442.5 L228.0 449.8 L236.0 457.2 L244.0 464.5 L252.0 471.8 L260.0 479.1 L268.0 486.5 L276.0 495.6 L284.0 505.3 L292.0 515.0 L300.0 522.7 L308.0 530.3 L316.0 534.6 L324.0 536.5 L332.0 537.7 L340.0 537.7 L348.0 537.7 L356.0 537.4 L364.0 537.1 L372.0 537.2 L380.0 537.0 L388.0 536.6 L396.0 536.0 L404.0 536.0 L412.0 537.0 L420.0 537.4 L428.0 535.8 L436.0 535.3 L444.0 535.1 L452.0 535.8 L460.0 533.9 L468.0 532.4 L476.0 529.3 L484.0 526.8 L492.0 524.2 L500.0 524.1 L508.0 524.3 L516.0 524.5 L524.0 524.6 L532.0 524.6 L540.0 524.5 L548.0 524.3 L556.0 524.3 L564.0 524.2 L572.0 524.1 L580.0 523.9 L588.0 523.9 L596.0 523.9 L604.0 523.8 L612.0 524.1 L620.0 528.4 L628.0 531.1 L636.0 533.8 L644.0 536.0 L652.0 538.4 L660.0 540.1 L668.0 541.2" fill="none" stroke="#ff00ff" stroke-width="1"/><path d="M12.0 442.9 L20.0 436.4 L28.0 430.0 L36.0 423.5 L44.0 417.0 L52.0 413.4 L60.0 410.0 L68.0 406.7 L76.0 404.8 L84.0 402.9 L92.0 401.0 L100.0 400.6 L108.0 400.2 L116.0 400.8 L124.0 401.4 L132.0 403.2 L140.0 408.3 L148.0 413.4 L156.0 418.5 L164.0 423.8 L172.0 429.3 L180.0 434.9 L188.0 439.9 L196.0 444.7 L204.0 449.7 L212.0 455.4 L220.0 461.1 L228.0 470.3 L236.0 479.5 L244.0 488.7 L252.0 497.9 L260.0 507.1 L268.0 516.3 L276.0 522.7 L284.0 528.7 L292.0 531.3 L300.0 533.1 L308.0 533.2 L316.0 533.3 L324.0 533.3 L332.0 533.3 L340.0 533.7 L348.0 533.8 L356.0 533.6 L364.0 533.3 L372.0 534.4 L380.0 537.1 L388.0 539.0 L396.0 538.2 L404.0 536.7 L412.0 534.8 L420.0 533.7 L428.0 532.2 L436.0 532.9 L444.0 533.7 L452.0 534.7 L460.0 532.0 L468.0 529.2 L476.0 524.1 L484.0 519.8 L492.0 515.6 L500.0 514.7 L508.0 514.7 L516.0 514.7 L524.0 514.7 L532.0 514.7 L540.0 514.6 L548.0 514.3 L556.0 514.3 L564.0 514.2 L572.0 514.0 L580.0 514.2 L588.0 520.3 L596.0 524.4 L604.0 528.2 L612.0 531.0 L620.0 534.4 L628.0 536.6 L636.0 538.1 L644.0 540.2 L652.0 542.1 L660.0 543.7 L668.0 545.1" fill="none" stroke="#ff00ff" stroke-width="1"/><path d="M12.0 420.7 L20.0 419.4 L28.0 414.5 L36.0 408.8 L44.0 403.1 L52.0 400.6 L60.0 398.6 L68.0 398.8 L76.0 398.9 L84.0 399.8 L92.0 400.8 L100.0 401.7 L108.0 402.9 L116.0 404.3 L124.0 405.8 L132.0 408.1 L140.0 412.6 L148.0 417.1 L156.0 424.3 L164.0 433.1 L172.0 441.9 L180.0 450.7 L188.0 459.5 L196.0 468.3 L204.0 476.6 L212.0 482.3 L220.0 488.0 L228.0 496.4 L236.0 504.8 L244.0 513.2 L252.0 519.2 L260.0 523.1 L268.0 525.6 L276.0 525.8 L284.0 525.9 L292.0 525.9 L300.0 525.9 L308.0 526.7 L316.0 527.1 L324.0 527.3 L332.0 527.4 L340.0 529.4 L348.0 534.1 L356.0 537.4 L364.0 536.8 L372.0 536.3 L380.0 535.4 L388.0 535.8 L396.0 535.8 L404.0 535.5 L412.0 534.5 L420.0 532.9 L428.0 530.6 L436.0 530.6 L444.0 530.6 L452.0 530.9 L460.0 526.0 L468.0 521.0 L476.0 513.1 L484.0 506.5 L492.0 500.1 L500.0 498.9 L508.0 498.9 L516.0 498.9 L524.0 498.9 L532.0 498.9 L540.0 498.6 L548.0 499.0 L556.0 507.8 L564.0 513.6 L572.0 519.0 L580.0 522.9 L588.0 527.9 L596.0 531.5 L604.0 533.7 L612.0 536.6 L620.0 539.3 L628.0 541.3 L636.0 543.2 L644.0 543.7 L652.0 544.0 L660.0 544.1 L668.0 544.3" fill="none" stroke="#ff00ff" stroke-width="1"/><path d="M12.0 453.6 L20.0 452.2 L28.0 450.7 L36.0 449.3 L44.0 447.6 L52.0 445.8 L60.0 444.0 L68.0 441.9 L76.0 439.1 L84.0 436.4 L92.0 433.6 L100.0 431.0 L108.0 428.3 L116.0 425.7 L124.0 423.3 L132.0 420.9 L140.0 418.5 L148.0 416.4 L156.0 414.3 L164.0 412.2 L172.0 411.9 L180.0 411.6 L188.0 412.1 L196.0 412.9 L204.0 413.7 L212.0 414.5 L220.0 415.2 L228.0 416.5 L236.0 418.2 L244.0 419.9 L252.0 421.6 L260.0 426.6 L268.0 432.9 L276.0 440.3 L284.0 448.3 L292.0 456.3 L300.0 464.3 L308.0 471.8 L316.0 478.7 L324.0 485.6 L332.0 492.6 L340.0 498.1 L348.0 503.6 L356.0 509.0 L364.0 514.5 L372.0 519.6 L380.0 523.6 L388.0 527.5 L396.0 531.3 L404.0 534.0 L412.0 536.7 L420.0 539.4 L428.0 540.4 L436.0 541.0 L444.0 541.4 L452.0 541.4 L460.0 540.5 L468.0 539.5 L476.0 538.0 L484.0 536.9 L492.0 535.7 L500.0 535.5 L508.0 535.6 L516.0 536.0 L524.0 536.9 L532.0 537.6 L540.0 537.6 L548.0 537.6 L556.0 537.6 L564.0 537.8 L572.0 538.0 L580.0 538.3 L588.0 538.6 L596.0 538.9 L604.0 539.1 L612.0 539.2 L620.0 539.3 L628.0 539.3 L636.0 539.3 L644.0 539.3 L652.0 539.3 L660.0 539.3 L668.0 539.3" fill="none" stroke="#ffff00" stroke-width="2"/><path d="M12.0 402.7 L20.0 401.0 L28.0 399.4 L36.0 398.4 L44.0 397.9 L52.0 397.4 L60.0 397.5 L68.0 397.7 L76.0 399.5 L84.0 400.4 L92.0 401.6 L100.0 405.2 L108.0 408.7 L116.0 412.0 L124.0 415.8 L132.0 419.7 L140.0 420.7 L148.0 426.8 L156.0 433.3 L164.0 445.2 L172.0 457.6 L180.0 469.6 L188.0 486.2 L196.0 501.7 L204.0 510.7 L212.0 522.4 L220.0 526.3 L228.0 525.6 L236.0 523.6 L244.0 517.3 L252.0 513.3 L260.0 513.3 L268.0 513.3 L276.0 514.5 L284.0 515.1 L292.0 515.4 L300.0 515.8 L308.0 519.1 L316.0 526.5 L324.0 532.3 L332.0 532.4 L340.0 532.1 L348.0 531.9 L356.0 533.4 L364.0 534.3 L372.0 536.4 L380.0 537.7 L388.0 538.2 L396.0 538.0 L404.0 536.1 L412.0 532.7 L420.0 528.5 L428.0 523.5 L436.0 522.1 L444.0 521.3 L452.0 521.3 L460.0 513.5 L468.0 505.7 L476.0 493.6 L484.0 483.5 L492.0 473.6 L500.0 471.7 L508.0 471.7 L516.0 472.8 L524.0 486.4 L532.0 495.5 L540.0 503.9 L548.0 510.1 L556.0 517.7 L564.0 522.9 L572.0 526.0 L580.0 530.2 L588.0 534.4 L596.0 538.0 L604.0 541.0 L612.0 541.5 L620.0 541.8 L628.0 541.7 L636.0 541.7 L644.0 543.0 L652.0 544.4 L660.0 545.3 L668.0 545.4" fill="none" stroke="#00ffff" stroke-width="2"/><path d="M12.0 405.4 L20.0 405.4 L28.0 405.4 L36.0 401.5 L44.0 397.4 L52.0 395.7 L60.0 395.7 L68.0 407.5 L76.0 427.1 L84.0 450.1 L92.0 479.4 L100.0 525.3 L108.0 532.9 L116.0 535.5 L124.0 529.1 L132.0 506.1 L140.0 478.1 L148.0 480.7 L156.0 474.3 L164.0 473.0 L172.0 488.3 L180.0 522.7 L188.0 541.9 L196.0 545.7 L204.0 527.8 L212.0 502.3 L220.0 457.7 L228.0 422.0 L236.0 409.2 L244.0 406.7 L252.0 429.6 L260.0 474.3 L268.0 510.0 L276.0 527.8 L284.0 540.6 L292.0 548.2 L300.0 549.5 L308.0 549.5 L316.0 549.5 L324.0 548.2 L332.0 545.7 L340.0 538.0 L348.0 532.9 L356.0 513.8 L364.0 487.0 L372.0 467.9 L380.0 434.8 L388.0 451.3 L396.0 460.2 L404.0 457.7 L412.0 428.4 L420.0 428.4 L428.0 414.4 L436.0 447.5 L444.0 483.2 L452.0 510.0 L460.0 510.0 L468.0 521.5 L476.0 483.2 L484.0 473.0 L492.0 459.0 L500.0 450.1 L508.0 481.9 L516.0 516.4 L524.0 543.1 L532.0 544.4 L540.0 540.6 L548.0 527.8 L556.0 527.8 L564.0 520.2 L572.0 510.0 L580.0 493.4 L588.0 502.3 L596.0 532.9 L604.0 532.9 L612.0 526.5 L620.0 522.7 L628.0 517.6 L636.0 513.8 L644.0 515.1 L652.0 513.8 L660.0 522.7 L668.0 541.9" fill="none" stroke="#ff0000" stroke-width="2"/></g>
<rect x="11.5" y="32.5" width="665" height="345" fill="none" stroke="#fff"/>
<rect x="11.5" y="379.5" width="665" height="171" fill="none" stroke="#fff"/>
<g shape-rendering="auto">
<polygon points="35.5,88.5 37.2,92.6 41.6,92.0 38.9,95.5 41.6,99.0 37.2,98.4 35.5,102.5 33.8,98.4 29.4,99.0 32.1,95.5 29.4,92.0 33.8,92.6" fill="#87ceeb"/>
<path d="M44 109 V89 M38.5 93.5 L44 88.5 L53 99" fill="none" stroke="#87ceeb" stroke-width="3.4" stroke-linejoin="miter"/>
<polygon points="284.0,148.9 285.6,152.8 289.9,152.3 287.3,155.7 289.9,159.1 285.6,158.6 284.0,162.5 282.4,158.6 278.1,159.1 280.7,155.7 278.1,152.3 282.4,152.8" fill="#ff0000"/>
<path d="M292.8 152 V171 M284.5 162.5 L292.8 172 L302 161.5" fill="none" stroke="#ff0000" stroke-width="3.2" stroke-linejoin="miter"/>
</g>
<polygon points="12,545 17,550 12,550" fill="#778899" shape-rendering="auto"/>
<rect x="677" y="44" width="3" height="1" fill="#fff"/>
<text x="682" y="47.7" font-size="9.5" font-family="Liberation Sans" fill="#ffffff" stroke="#ffffff" stroke-width="0.3" shape-rendering="auto" textLength="33" lengthAdjust="spacingAndGlyphs">0.68010</text>
<rect x="677" y="77" width="3" height="1" fill="#fff"/>
<text x="682" y="80.7" font-size="9.5" font-family="Liberation Sans" fill="#ffffff" stroke="#ffffff" stroke-width="0.3" shape-rendering="auto" textLength="33" lengthAdjust="spacingAndGlyphs">0.67795</text>
<rect x="677" y="110" width="3" height="1" fill="#fff"/>
<text x="682" y="113.7" font-size="9.5" font-family="Liberation Sans" fill="#ffffff" stroke="#ffffff" stroke-width="0.3" shape-rendering="auto" textLength="33" lengthAdjust="spacingAndGlyphs">0.67575</text>
<rect x="677" y="143" width="3" height="1" fill="#fff"/>
<text x="682" y="146.7" font-size="9.5" font-family="Liberation Sans" fill="#ffffff" stroke="#ffffff" stroke-width="0.3" shape-rendering="auto" textLength="33" lengthAdjust="spacingAndGlyphs">0.67360</text>
<rect x="677" y="176" width="3" height="1" fill="#fff"/>
<text x="682" y="179.7" font-size="9.5" font-family="Liberation Sans" fill="#ffffff" stroke="#ffffff" stroke-width="0.3" shape-rendering="auto" textLength="33" lengthAdjust="spacingAndGlyphs">0.67145</text>
<rect x="677" y="209" width="3" height="1" fill="#fff"/>
<text x="682" y="212.7" font-size="9.5" font-family="Liberation Sans" fill="#ffffff" stroke="#ffffff" stroke-width="0.3" shape-rendering="auto" textLength="33" lengthAdjust="spacingAndGlyphs">0.66930</text>
<rect x="677" y="242" width="3" height="1" fill="#fff"/>
<text x="682" y="245.7" font-size="9.5" font-family="Liberation Sans" fill="#ffffff" stroke="#ffffff" stroke-width="0.3" shape-rendering="auto" textLength="33" lengthAdjust="spacingAndGlyphs">0.66710</text>
<rect x="677" y="308" width="3" height="1" fill="#fff"/>
<text x="682" y="311.7" font-size="9.5" font-family="Liberation Sans" fill="#ffffff" stroke="#ffffff" stroke-width="0.3" shape-rendering="auto" textLength="33" lengthAdjust="spacingAndGlyphs">0.66280</text>
<rect x="677" y="341" width="3" height="1" fill="#fff"/>
<text x="682" y="344.7" font-size="9.5" font-family="Liberation Sans" fill="#ffffff" stroke="#ffffff" stroke-width="0.3" shape-rendering="auto" textLength="33" lengthAdjust="spacingAndGlyphs">0.66060</text>
<rect x="677" y="374" width="3" height="1" fill="#fff"/>
<text x="682" y="377.7" font-size="9.5" font-family="Liberation Sans" fill="#ffffff" stroke="#ffffff" stroke-width="0.3" shape-rendering="auto" textLength="33" lengthAdjust="spacingAndGlyphs">0.65845</text>
<rect x="677" y="277" width="3" height="1" fill="#fff"/>
<rect x="678" y="272" width="41" height="11" fill="#fff"/>
<text x="682" y="281.2" font-size="9.5" font-family="Liberation Sans" fill="#000" stroke="#000" stroke-width="0.3" textLength="33" lengthAdjust="spacingAndGlyphs">0.66483</text>
<text x="680" y="390.0" font-size="9.5" font-family="Liberation Sans" fill="#ffffff" stroke="#ffffff" stroke-width="0.3" shape-rendering="auto" textLength="14" lengthAdjust="spacingAndGlyphs">120</text>
<text x="680" y="400.0" font-size="9.5" font-family="Liberation Sans" fill="#ffffff" stroke="#ffffff" stroke-width="0.3" shape-rendering="auto" textLength="14.5" lengthAdjust="spacingAndGlyphs">100</text>
<text x="679" y="415.0" font-size="9.5" font-family="Liberation Sans" fill="#ffffff" stroke="#ffffff" stroke-width="0.3" shape-rendering="auto" textLength="9.5" lengthAdjust="spacingAndGlyphs">80</text>
<text x="680" y="477.0" font-size="9.5" font-family="Liberation Sans" fill="#ffffff" stroke="#ffffff" stroke-width="0.3" shape-rendering="auto" textLength="18" lengthAdjust="spacingAndGlyphs">0.00</text>
<text x="679" y="538.0" font-size="9.5" font-family="Liberation Sans" fill="#ffffff" stroke="#ffffff" stroke-width="0.3" shape-rendering="auto" textLength="13" lengthAdjust="spacingAndGlyphs">-80</text>
<text x="680" y="547.0" font-size="9.5" font-family="Liberation Sans" fill="#ffffff" stroke="#ffffff" stroke-width="0.3" shape-rendering="auto" textLength="18" lengthAdjust="spacingAndGlyphs">-100</text>
<rect x="677" y="381" width="2" height="1" fill="#fff"/>
<rect x="677" y="473" width="2" height="1" fill="#fff"/>
<rect x="677" y="550" width="2" height="1" fill="#fff"/>
<rect x="12" y="551" width="1" height="3" fill="#fff"/>
<text x="12" y="563" font-size="9.5" font-family="Liberation Sans" fill="#ffffff" stroke="#ffffff" stroke-width="0.3" shape-rendering="auto" textLength="52" lengthAdjust="spacingAndGlyphs">18 Sep 2020</text>
<rect x="76" y="551" width="1" height="3" fill="#fff"/>
<text x="76" y="563" font-size="9.5" font-family="Liberation Sans" fill="#ffffff" stroke="#ffffff" stroke-width="0.3" shape-rendering="auto" textLength="53" lengthAdjust="spacingAndGlyphs">18 Sep 11:00</text>
<rect x="140" y="551" width="1" height="3" fill="#fff"/>
<text x="140" y="563" font-size="9.5" font-family="Liberation Sans" fill="#ffffff" stroke="#ffffff" stroke-width="0.3" shape-rendering="auto" textLength="53" lengthAdjust="spacingAndGlyphs">18 Sep 19:00</text>
<rect x="204" y="551" width="1" height="3" fill="#fff"/>
<text x="204" y="563" font-size="9.5" font-family="Liberation Sans" fill="#ffffff" stroke="#ffffff" stroke-width="0.3" shape-rendering="auto" textLength="53" lengthAdjust="spacingAndGlyphs">21 Sep 03:00</text>
<rect x="268" y="551" width="1" height="3" fill="#fff"/>
<text x="268" y="563" font-size="9.5" font-family="Liberation Sans" fill="#ffffff" stroke="#ffffff" stroke-width="0.3" shape-rendering="auto" textLength="53" lengthAdjust="spacingAndGlyphs">21 Sep 11:00</text>
<rect x="332" y="551" width="1" height="3" fill="#fff"/>
<text x="332" y="563" font-size="9.5" font-family="Liberation Sans" fill="#ffffff" stroke="#ffffff" stroke-width="0.3" shape-rendering="auto" textLength="53" lengthAdjust="spacingAndGlyphs">21 Sep 19:00</text>
<rect x="396" y="551" width="1" height="3" fill="#fff"/>
<text x="396" y="563" font-size="9.5" font-family="Liberation Sans" fill="#ffffff" stroke="#ffffff" stroke-width="0.3" shape-rendering="auto" textLength="53" lengthAdjust="spacingAndGlyphs">22 Sep 03:00</text>
<rect x="460" y="551" width="1" height="3" fill="#fff"/>
<text x="460" y="563" font-size="9.5" font-family="Liberation Sans" fill="#ffffff" stroke="#ffffff" stroke-width="0.3" shape-rendering="auto" textLength="53" lengthAdjust="spacingAndGlyphs">22 Sep 11:00</text>
<rect x="524" y="551" width="1" height="3" fill="#fff"/>
<text x="524" y="563" font-size="9.5" font-family="Liberation Sans" fill="#ffffff" stroke="#ffffff" stroke-width="0.3" shape-rendering="auto" textLength="53" lengthAdjust="spacingAndGlyphs">22 Sep 19:00</text>
<rect x="588" y="551" width="1" height="3" fill="#fff"/>
<text x="588" y="563" font-size="9.5" font-family="Liberation Sans" fill="#ffffff" stroke="#ffffff" stroke-width="0.3" shape-rendering="auto" textLength="53" lengthAdjust="spacingAndGlyphs">23 Sep 03:00</text>
<rect x="652" y="551" width="1" height="3" fill="#fff"/>
<text x="652" y="563" font-size="9.5" font-family="Liberation Sans" fill="#ffffff" stroke="#ffffff" stroke-width="0.3" shape-rendering="auto" textLength="53" lengthAdjust="spacingAndGlyphs">23 Sep 11:00</text>
<polygon points="15,39 22,39 18.5,43" fill="#fff" shape-rendering="auto"/>
<text x="27" y="43.5" font-size="9.3" font-family="Liberation Sans" fill="#ffffff" stroke="#ffffff" stroke-width="0.15" shape-rendering="auto" textLength="54.5" lengthAdjust="spacingAndGlyphs">NZDUSD,H1</text>
<text x="87" y="43.5" font-size="9.3" font-family="Liberation Sans" fill="#ffffff" stroke="#ffffff" stroke-width="0.15" shape-rendering="auto" textLength="141" lengthAdjust="spacingAndGlyphs">0.66474 0.66485 0.66472 0.66483</text>
<text x="16" y="391.5" font-size="9.3" font-family="Liberation Sans" fill="#ffffff" stroke="#ffffff" stroke-width="0.15" shape-rendering="auto" textLength="226" lengthAdjust="spacingAndGlyphs">RCI8lines 26.7 -70.1 -78.2 -82.6 -85.9 -62.3 -15.8 14.2</text>
</svg></body></html>
